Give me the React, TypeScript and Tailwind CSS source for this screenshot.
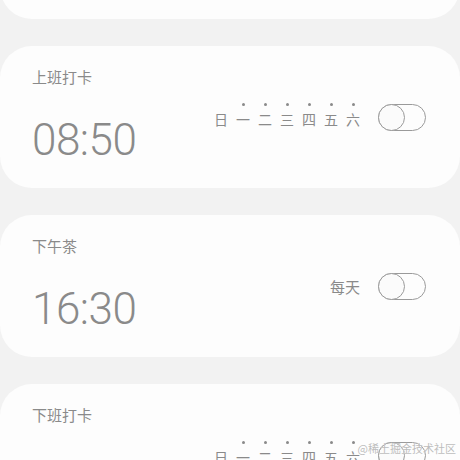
const days = ['日', '一', '二', '三', '四', '五', '六'];

interface Alarm {
  title: string;
  time: string;
  repeat: 'week' | 'daily';
}

// first card is scrolled above the viewport, only its bottom edge shows
const alarms: Alarm[] = [
  { title: '上班打卡', time: '08:50', repeat: 'week' },
  { title: '下午茶', time: '16:30', repeat: 'daily' },
  { title: '下班打卡', time: '18:00', repeat: 'week' },
];

const cjk = { fontFamily: '"Noto Sans CJK SC", sans-serif' };

function Toggle() {
  return (
    <div className="flex items-center w-[48px] h-[27px] rounded-full border border-[#9a9a9a]">
      <div className="-m-px w-[27px] h-[27px] rounded-full border border-[#9a9a9a] bg-[#fbfbfb]" />
    </div>
  );
}

function WeekDays() {
  return (
    <div className="flex gap-2">
      {days.map((d, i) => (
        <div key={d} className="flex flex-col items-center w-[14px]">
          <span className={`w-[3px] h-[3px] rounded-full ${i === 0 ? 'bg-transparent' : 'bg-[#8a8a8a]'}`} />
          <span className="mt-[5px] text-[14px] leading-[16px] text-[#8a8a8a]">{d}</span>
        </div>
      ))}
    </div>
  );
}

function AlarmCard({ alarm }: { alarm: Alarm }) {
  return (
    <div className="shrink-0 h-[142px] rounded-[32px] bg-[#fdfdfd] flex justify-between pl-8 pr-[34px]" style={cjk}>
      <div className="pt-[23px] flex flex-col">
        <span className="text-[15px] leading-[15px] text-[#8a8a8a]">{alarm.title}</span>
        <span
          className="mt-[34px] text-[44px] leading-[44px] font-light tracking-[-0.5px] text-[#8a8a8a]"
          style={{ fontFamily: 'Roboto, sans-serif' }}
        >
          {alarm.time}
        </span>
      </div>
      <div className="flex items-center gap-[18px]">
        {alarm.repeat === 'week' ? (
          <div className="-mt-[4px]">
            <WeekDays />
          </div>
        ) : (
          <span className="mt-[2px] text-[15px] text-[#8a8a8a]">每天</span>
        )}
        <Toggle />
      </div>
    </div>
  );
}

export default function App() {
  return (
    <div className="relative w-[460px] h-[460px] overflow-hidden bg-[#f2f2f2]">
      <div className="flex flex-col gap-[27px] -mt-[123px]">
        <div className="shrink-0 h-[142px] rounded-[32px] bg-[#fdfdfd]" />
        {alarms.map((a) => (
          <AlarmCard key={a.title} alarm={a} />
        ))}
      </div>
      <span
        className="absolute right-[4px] bottom-[6px] text-[11px] leading-none text-[#bdbdbd]"
        style={{ fontFamily: '"Noto Sans CJK SC", serif', textShadow: '0 0 1px #fff' }}
      >
        @稀土掘金技术社区
      </span>
    </div>
  );
}
